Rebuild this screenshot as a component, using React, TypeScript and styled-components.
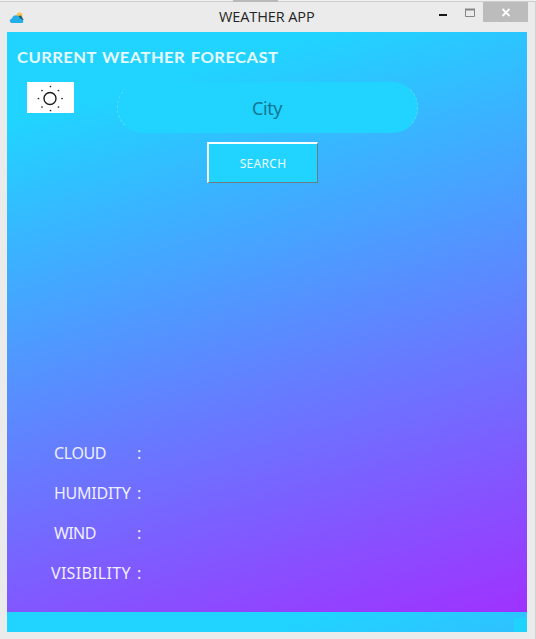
import React from 'react';
import styled, { createGlobalStyle } from 'styled-components';

const GlobalStyle = createGlobalStyle`
  * { box-sizing: border-box; }
  body { margin: 0; background: #ebebeb; overflow: hidden; }
`;

const Window = styled.div`
  position: relative;
  width: 536px;
  height: 639px;
  padding: 2px 9px 7px 7px;
  background: #ebebeb;
  border-top: 1px solid #f0f0f0;
  box-shadow: inset 0 1px 0 #cdcdcd, inset -1px 0 0 #d2d2d2;
`;

const BackgroundTab = styled.div`
  position: absolute;
  top: -1px;
  left: 233px;
  width: 45px;
  height: 2px;
  background: #b9b9b9;
`;

const TitleBar = styled.header`
  display: grid;
  grid-template-columns: 212px 1fr auto;
  height: 29px;
  margin-right: -1px;
`;

const AppIcon = styled.svg`
  display: block;
  width: 16px;
  height: 14px;
  margin: 7px 0 0 2px;
`;

const WindowTitle = styled.div`
  font: 14.5px/28px 'Open Sans', sans-serif;
  letter-spacing: -0.1px;
  color: #242424;
  white-space: nowrap;
`;

const Controls = styled.div`
  display: flex;
  align-items: flex-start;
`;

const ControlIcon = styled.svg`
  display: block;
  width: 90px;
  height: 20px;
  margin-top: -1px;
`;

const Content = styled.main`
  display: flex;
  flex-direction: column;
  width: 520px;
  height: 600px;
  background: linear-gradient(164deg, #21d4ff 0%, #21d3ff 13%, #9f32ff 100%) 0 0 / 520px 580px;
`;

const Heading = styled.h1`
  width: max-content;
  margin: 13px 0 0 10px;
  font: 700 15px/24px Lato, sans-serif;
  letter-spacing: 0.4px;
  word-spacing: 1px;
  color: #e6faff;
  transform: scaleX(1.105);
  transform-origin: left;
`;

const SearchArea = styled.section`
  display: grid;
  grid-template-columns: 47px 301px;
  column-gap: 43px;
  margin: 13px 0 0 20px;
`;

const WeatherImage = styled.svg`
  display: block;
  width: 47px;
  height: 31px;
  background: #fff;
`;

const CityInput = styled.input`
  width: 301px;
  height: 51px;
  padding: 0 1px 0 0;
  border: 1px dashed transparent;
  border-left-color: #55dcff;
  border-right-color: #55dcff;
  border-radius: 25px;
  outline: 0;
  background: #21d3ff;
  font: 18px 'Noto Sans', sans-serif;
  letter-spacing: -0.4px;
  text-align: center;
  color: #14778f;
  &::placeholder { color: #14778f; opacity: 1; }
`;

const SearchButton = styled.button`
  width: 111px;
  height: 41px;
  margin: 9px 0 0 200px;
  padding: 1px 0 0;
  border: solid;
  border-width: 2px 1px 1px 2px;
  border-color: #f8ffff #6d7c83 #6d7c83 #f8ffff;
  background: #21d3ff;
  font: 12px 'Noto Sans', sans-serif;
  letter-spacing: 0.3px;
  color: #e9fbff;
`;

const Metrics = styled.section`
  display: grid;
  grid-auto-rows: 40px;
  margin: 250px 0 0 44px;
`;

const Metric = styled.div<{ $indent: number }>`
  display: grid;
  grid-template-columns: 86px 10px;
  font: 16px/40px 'Noto Sans', sans-serif;
  color: #f0efff;
  & > span:first-child { padding-left: ${({ $indent }) => $indent}px; }
`;

const MetricName = styled.span<{ $spacing: number }>`
  letter-spacing: ${({ $spacing }) => $spacing}px;
  white-space: nowrap;
`;

const Colon = styled.span`
  font-weight: 400;
`;

const SizeGrip = styled.div`
  width: 13px;
  height: 14px;
  margin: auto 0 0 auto;
  background: #1fd3fd;
`;

const metrics = [
  { name: 'CLOUD', indent: 3, spacing: -0.4 },
  { name: 'HUMIDITY', indent: 3, spacing: -0.25 },
  { name: 'WIND', indent: 3, spacing: -0.6 },
  { name: 'VISIBILITY', indent: 0, spacing: 0.3 },
];

const rays = [[23.5, 4.5], [31.5, 8.5], [35, 16.5], [31.5, 25], [23.5, 28.5], [15, 25], [11.5, 16.5], [15, 8.5]];

export default function App() {
  return (
    <>
      <GlobalStyle />
      <Window>
        <BackgroundTab />
        <TitleBar>
          <AppIcon viewBox="0 0 16 14">
            <circle cx="10.5" cy="5.5" r="3" fill="#f5c453" />
            <path d="M9 6L12 5.5L14.7 10H10Z" fill="#25566c" />
            <path d="M3 13C0 13 0 9 3 8.5C4 4.5 9.5 4 11 8.5C14.5 8.5 15.5 13 13 13Z" fill="#23aee8" />
          </AppIcon>
          <WindowTitle>WEATHER APP</WindowTitle>
          <Controls>
            <ControlIcon viewBox="0 0 90 20">
              <path d="M1 13H9" stroke="#171717" strokeWidth="2" />
              <path d="M27.5 8V14.5H36.5V8" fill="none" stroke="#858585" />
              <path d="M27 7.5H37" stroke="#858585" strokeWidth="2" />
              <path d="M45 0H90V20H45Z" fill="#bcbcbc" />
              <path d="M64.5 7L71.5 14M71.5 7L64.5 14" stroke="#fff" strokeWidth="1.8" />
            </ControlIcon>
          </Controls>
        </TitleBar>
        <Content>
          <Heading>CURRENT WEATHER FORECAST</Heading>
          <SearchArea>
            <WeatherImage viewBox="0 0 47 31">
              <circle cx="23" cy="16.5" r="6" fill="none" stroke="#1c1c1c" strokeWidth="1.4" />
              {rays.map(([x, y]) => <circle key={`${x}-${y}`} cx={x} cy={y} r="0.85" fill="#222" />)}
            </WeatherImage>
            <CityInput placeholder="City" aria-label="City" />
          </SearchArea>
          <SearchButton>SEARCH</SearchButton>
          <Metrics>
            {metrics.map(({ name, indent, spacing }) => (
              <Metric key={name} $indent={indent}>
                <MetricName $spacing={spacing}>{name}</MetricName>
                <Colon>:</Colon>
              </Metric>
            ))}
          </Metrics>
          <SizeGrip />
        </Content>
      </Window>
    </>
  );
}
